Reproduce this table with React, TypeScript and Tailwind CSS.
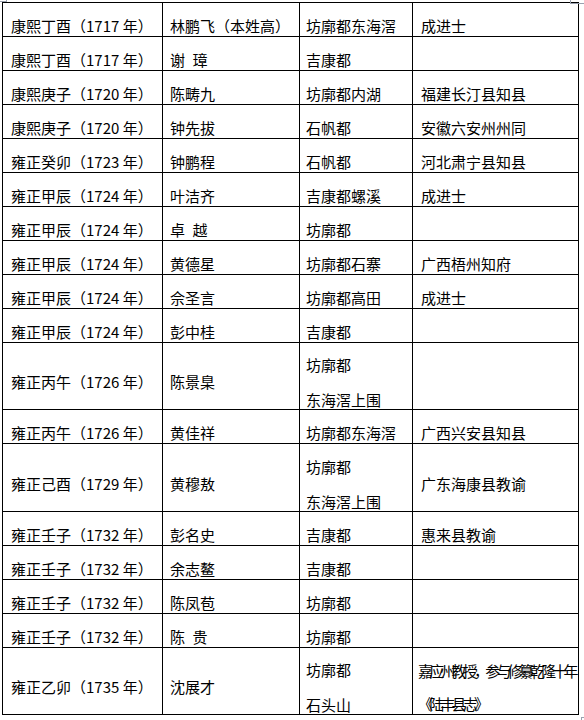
import React from "react";

type Row = {
  h: string;
  year: string;
  name: string;
  place: string[];
  note?: string[];
  squeeze?: boolean;
};

const rows: Row[] = [
  { h: "h-[34px]", year: "康熙丁酉（1717 年）", name: "林鹏飞（本姓高）", place: ["坊廓都东海滘"], note: ["成进士"] },
  { h: "h-[34px]", year: "康熙丁酉（1717 年）", name: "谢\u2002璋", place: ["吉康都"] },
  { h: "h-[34px]", year: "康熙庚子（1720 年）", name: "陈畴九", place: ["坊廓都内湖"], note: ["福建长汀县知县"] },
  { h: "h-[34px]", year: "康熙庚子（1720 年）", name: "钟先拔", place: ["石帆都"], note: ["安徽六安州州同"] },
  { h: "h-[34px]", year: "雍正癸卯（1723 年）", name: "钟鹏程", place: ["石帆都"], note: ["河北肃宁县知县"] },
  { h: "h-[34px]", year: "雍正甲辰（1724 年）", name: "叶洁齐", place: ["吉康都螺溪"], note: ["成进士"] },
  { h: "h-[34px]", year: "雍正甲辰（1724 年）", name: "卓\u2002越", place: ["坊廓都"] },
  { h: "h-[34px]", year: "雍正甲辰（1724 年）", name: "黄德星", place: ["坊廓都石寨"], note: ["广西梧州知府"] },
  { h: "h-[34px]", year: "雍正甲辰（1724 年）", name: "佘圣言", place: ["坊廓都高田"], note: ["成进士"] },
  { h: "h-[34px]", year: "雍正甲辰（1724 年）", name: "彭中桂", place: ["吉康都"] },
  { h: "h-[67px]", year: "雍正丙午（1726 年）", name: "陈景臬", place: ["坊廓都", "东海滘上围"] },
  { h: "h-[34px]", year: "雍正丙午（1726 年）", name: "黄佳祥", place: ["坊廓都东海滘"], note: ["广西兴安县知县"] },
  { h: "h-[68px]", year: "雍正己酉（1729 年）", name: "黄穆敖", place: ["坊廓都", "东海滘上围"], note: ["广东海康县教谕"] },
  { h: "h-[34px]", year: "雍正壬子（1732 年）", name: "彭名史", place: ["吉康都"], note: ["惠来县教谕"] },
  { h: "h-[34px]", year: "雍正壬子（1732 年）", name: "余志鳌", place: ["吉康都"] },
  { h: "h-[34px]", year: "雍正壬子（1732 年）", name: "陈凤苞", place: ["坊廓都"] },
  { h: "h-[34px]", year: "雍正壬子（1732 年）", name: "陈\u2002贵", place: ["坊廓都"] },
  {
    h: "h-[67px]",
    year: "雍正乙卯（1735 年）",
    name: "沈展才",
    place: ["坊廓都", "石头山"],
    note: ["嘉应州教授，参与修纂乾隆十年", "《陆丰县志》"],
    squeeze: true,
  },
];

const Cell = ({ h, pad, lines, squeeze }: { h: string; pad: string; lines: string[]; squeeze?: boolean }) => (
  <div
    className={`${h} ${pad} border-r border-b border-black flex flex-col justify-center pt-[12px] overflow-visible whitespace-nowrap`}
  >
    {lines.map((l, i) => (
      <div
        key={i}
        className={
          squeeze
            ? "leading-[33px] tracking-[-3.8px] -ml-[3px]"
            : lines.length > 1
            ? "leading-[35px]"
            : "leading-[22px]"
        }
      >
        {l}
      </div>
    ))}
  </div>
);

export default function App() {
  return (
    <div
      className="relative w-[584px] h-[720px] bg-white text-black text-[15px]"
      style={{ fontFamily: '"Noto Sans CJK SC", "Noto Sans", sans-serif' }}
    >
      {/* page corner marks */}
      <div className="absolute left-0 top-0 w-[7px] h-[2px] border-r border-b border-gray-400" />
      <div className="absolute right-0 top-0 w-[14px] h-[4px] border-l border-b border-gray-400" />
      <div className="absolute right-0 bottom-0 w-[3px] h-[3px] border-l border-t border-gray-400" />

      <div className="pt-[2px] pl-[2px]">
        <div className="w-[577px] grid grid-cols-[160px_137px_113px_166px] border-l border-t border-black">
          {rows.map((r, i) => (
            <React.Fragment key={i}>
              <Cell h={r.h} pad="pl-[8px]" lines={[r.year]} />
              <Cell h={r.h} pad="pl-[7px]" lines={[r.name]} />
              <Cell h={r.h} pad="pl-[6px]" lines={r.place} />
              <Cell h={r.h} pad="pl-[8px]" lines={r.note ?? []} squeeze={r.squeeze} />
            </React.Fragment>
          ))}
        </div>
      </div>
    </div>
  );
}
